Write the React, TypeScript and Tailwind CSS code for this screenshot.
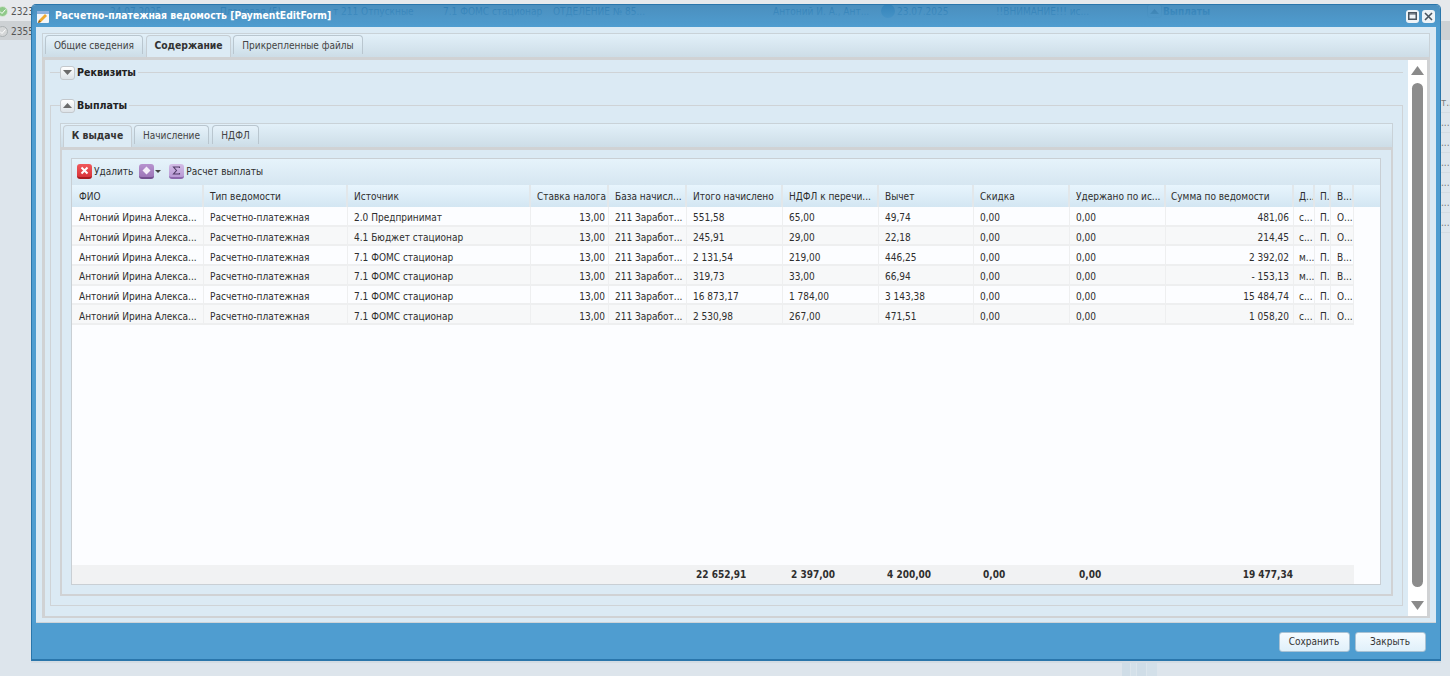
const FONT = "font-['DejaVu_Sans_Condensed','DejaVu_Sans',sans-serif]";

const cols = [132, 144, 183, 78, 78, 96, 96, 95, 96, 96, 128, 21, 16, 23];
const headers = ["ФИО", "Тип ведомости", "Источник", "Ставка налога", "База начисл...", "Итого начислено", "НДФЛ к перечи...", "Вычет", "Скидка", "Удержано по ис...", "Сумма по ведомости", "Д...", "П.", "В..."];
const rightAligned = [3, 10];
const rows = [
  ["2.0 Предпринимат", "551,58", "65,00", "49,74", "481,06", "с...", "О..."],
  ["4.1 Бюджет стационар", "245,91", "29,00", "22,18", "214,45", "с...", "О..."],
  ["7.1 ФОМС стационар", "2 131,54", "219,00", "446,25", "2 392,02", "м...", "В..."],
  ["7.1 ФОМС стационар", "319,73", "33,00", "66,94", "- 153,13", "м...", "В..."],
  ["7.1 ФОМС стационар", "16 873,17", "1 784,00", "3 143,38", "15 484,74", "с...", "О..."],
  ["7.1 ФОМС стационар", "2 530,98", "267,00", "471,51", "1 058,20", "с...", "О..."],
];
const bgRightRows = ["т...", "...", "...", "...", "...", "...", "..."];

function Tab({ label, active, w }: { label: string; active?: boolean; w: string }) {
  return active ? (
    <div className={`${w} flex h-[22px] items-center justify-center rounded-t-[4px] border border-b-0 border-[#c6ced4] bg-[#dcebf5] pb-[2px] text-[10.300px] font-bold text-[#333]`}>
      {label}
    </div>
  ) : (
    <div className={`${w} flex h-[19px] items-center justify-center rounded-t-[4px] border border-b-0 border-[#b9c6cf] bg-linear-to-b from-[#e6f2fa] to-[#cfe0ea] text-[#444]`}>
      {label}
    </div>
  );
}

function Toggle({ up }: { up?: boolean }) {
  return (
    <span className="flex h-[14px] w-[15px] items-center justify-center rounded-[3px] border border-[#c4c8cc] bg-linear-to-b from-white to-[#dde3e8]">
      <svg width="9" height="5" viewBox="0 0 9 5">
        <path d={up ? "M4.5 0 9 5H0z" : "M0 0h9L4.500 5z"} fill="#6b6b6b" />
      </svg>
    </span>
  );
}

function Legend({ label, up, ml }: { label: string; up?: boolean; ml: string }) {
  return (
    <legend className={`${ml} flex h-[15px] items-center gap-[2px] pr-[2px] text-[10.600px] font-bold text-[#222]`}>
      <Toggle up={up} />
      <span>{label}</span>
    </legend>
  );
}

function IconTile({ from, to, edge, children }: { from: string; to: string; edge: string; children: React.ReactNode }) {
  return (
    <span className={`flex h-[15px] w-[15px] items-center justify-center rounded-[3px] border-b-2 ${from} ${to} ${edge} bg-linear-to-b`}>
      {children}
    </span>
  );
}

function narrowPad(j: number) {
  if (j === 11 || j === 12) return "pl-[5px] pr-0";
  if (j === 13) return "pl-[6px] pr-0";
  return "";
}

export default function App() {
  return (
    <div className={`relative h-[676px] w-full overflow-hidden bg-[#dde5ec] text-[10px] ${FONT}`}>
      {/* page behind the window */}
      <div className="flex h-full flex-col">
        <div className="flex h-[21px] items-center whitespace-nowrap bg-[#e6e9ec] pt-[1px] text-[#3a6f96]">
          <span className="flex w-[110px] items-center text-[#555]">
            <svg width="11" height="11" viewBox="0 0 11 11" className="-ml-[3px] mr-[3px]"><circle cx="5.5" cy="5.5" r="5" fill="#8fc98a" stroke="#d9e6d6" /><path d="M3 5.5l2 2 3.500-4" stroke="#fff" fill="none" /></svg>
            2323
          </span>
          <span className="w-[110px]">24.07.2025</span>
          <span className="w-[113px]">Плановая (5)</span>
          <span className="w-[110px]">т 211 Отпускные</span>
          <span className="w-[110px]">7.1 ФОМС стационар</span>
          <span className="w-[220px]">ОТДЕЛЕНИЕ № 85...</span>
          <span className="w-[108px]">Антоний И. А., Ант...</span>
          <span className="mr-[2px] h-[14px] w-[14px] rounded-full bg-[#5b9fcb]" />
          <span className="w-[99px]">23.07.2025</span>
          <span className="w-[151px]">!!ВНИМАНИЕ!!! ис...</span>
          <span className="mr-[1px] w-[15px]"><Toggle up /></span>
          <span className="font-bold">Выплаты</span>
        </div>
        <div className="flex h-[19px] items-center bg-[#cdd1d4] pt-[1px] text-[#555]">
          <svg width="11" height="11" viewBox="0 0 11 11" className="-ml-[3px] mr-[3px]"><circle cx="5.5" cy="5.5" r="5" fill="#d5d7d8" stroke="#aab0b2" /><path d="M3 5.500l2 2 3.500-4" stroke="#fff" fill="none" /></svg>
          2355
        </div>
        <div className="flex flex-1">
          <div className="ml-[1122px] flex w-[35px]">
            <div className="w-[8px] bg-[#cfdde7]" />
            <div className="w-[6px] border-l border-[#dbe5ec] bg-[#d3e0e9]" />
            <div className="w-[10px] border-l border-[#dbe5ec] bg-[#cfdde7]" />
            <div className="flex-1 border-l border-[#dbe5ec] bg-[#d3e0e9]" />
          </div>
          <div className="ml-auto mt-[53px] flex w-[10px] flex-col overflow-hidden text-[#777]">
            {bgRightRows.map((t, i) => (
              <div key={i} className="flex h-[20px] items-center border-b border-[#d3dbe2] pl-[1px]">{t}</div>
            ))}
          </div>
        </div>
      </div>

      {/* modal window */}
      <div className="absolute left-[31px] top-[4px] flex h-[657px] w-[1409.5px] flex-col rounded-t-[5px] border-x border-t border-b-2 border-[#2a76ab] shadow-[0_2px_0_#d3dce3]">
        <div className="flex h-[22px] shrink-0 items-center rounded-t-[4px] bg-linear-to-b from-[#2f7fb6]/85 to-[#4f9dd0] pl-[4px] pr-[5px]">
          <svg width="15" height="15" viewBox="0 0 15 15" className="mr-[4px] mt-[2px]">
            <rect x="1" y="1" width="12" height="12" rx="1" fill="#f3f6fa" />
            <rect x="1" y="1" width="12" height="3" fill="#8fb1dd" />
            <path d="M2 13l1-3 6-6 2 2-6 6z" fill="#f0a92e" />
            <path d="M2 13l1-3 2 2z" fill="#8a5a16" />
          </svg>
          <span className="flex-1 text-[10.300px] font-bold text-white">Расчетно-платежная ведомость [PaymentEditForm]</span>
          <div className="flex gap-[3px]">
            <span className="flex h-[13px] w-[13px] items-center justify-center rounded-[3px] bg-[#eef3f7]">
              <svg width="9" height="8" viewBox="0 0 9 8"><rect x=".75" y=".75" width="7.500" height="6.500" fill="none" stroke="#4a5560" strokeWidth="1.500" /><path d="M1 2h7" stroke="#4a5560" /></svg>
            </span>
            <span className="flex h-[13px] w-[13px] items-center justify-center rounded-[3px] bg-[#eef3f7]">
              <svg width="9" height="9" viewBox="0 0 9 9"><path d="M1 1l7 7M8 1L1 8" stroke="#4a5560" strokeWidth="1.600" /></svg>
            </span>
          </div>
        </div>

        <div className="flex min-h-0 flex-1 flex-col border-x-[4px] border-[#4f9dd0] bg-[#dbeaf4]">
          <div className="flex-1 border-b border-[#cfd4d8] px-[6px] pt-[6px]">
            {/* outer tab strip */}
            <div className="flex h-[24px] border-x border-t border-[#c9d2d8] bg-linear-to-b from-[#e2f0f9] to-[#cddde7] pl-[2px] pt-[1px]">
              <Tab label="Общие сведения" w="w-[98px]" />
              <div className="ml-[3px]"><Tab label="Содержание" active w="w-[85px]" /></div>
              <div className="ml-[2px]"><Tab label="Прикрепленные файлы" w="w-[130px]" /></div>
            </div>

            {/* outer tab panel */}
            <div className="flex h-[561px] border-x-[3px] border-b-[2px] border-t-[3px] border-[#d0d2d4]">
              <div className="min-w-0 flex-1 px-[5px] pt-[5px]">
                <fieldset className="border-t border-[#cfd3d6]">
                  <Legend label="Реквизиты" ml="ml-[10px]" />
                </fieldset>
                <fieldset className="mt-[18px] h-[508px] border border-[#cfd3d6] px-[9px]">
                  <Legend label="Выплаты" up ml="ml-0" />
                  <div className="mt-[10px]">
                    {/* inner tab strip */}
                    <div className="flex h-[24px] border-x border-t border-[#c9d2d8] bg-linear-to-b from-[#e2f0f9] to-[#cddde7] pl-[2px] pt-[1px]">
                      <Tab label="К выдаче" active w="w-[69px]" />
                      <div className="ml-[2px]"><Tab label="Начисление" w="w-[75px]" /></div>
                      <div className="ml-[3px]"><Tab label="НДФЛ" w="w-[47px]" /></div>
                    </div>
                    {/* inner tab panel */}
                    <div className="h-[449px] border-x-[2px] border-b-[2px] border-t-[3px] border-[#d0d2d4] pl-[9px] pr-[10px] pt-[8px]">
                      <div className="flex h-[427px] flex-col border border-[#c9cfd4] bg-[#fcfdff] text-[#2e2e2e]">
                        {/* toolbar */}
                        <div className="flex h-[26px] shrink-0 items-center bg-linear-to-b from-[#e6f3fb] to-[#d6e6f1] pb-[1px] pl-[5px]">
                          <IconTile from="from-[#f0585c]" to="to-[#d9343a]" edge="border-[#a81c20]">
                            <svg width="9" height="9" viewBox="0 0 9 9"><path d="M1.500 1.500l6 6M7.500 1.500l-6 6" stroke="#fff" strokeWidth="2" /></svg>
                          </IconTile>
                          <span className="ml-[2px]">Удалить</span>
                          <span className="ml-[6px]">
                            <IconTile from="from-[#b793cf]" to="to-[#9d76b8]" edge="border-[#74508f]">
                              <svg width="9" height="9" viewBox="0 0 9 9"><path d="M4.500.5l4 4-4 4-4-4z" fill="#f4eefa" /></svg>
                            </IconTile>
                          </span>
                          <svg width="6" height="3" viewBox="0 0 6 3" className="ml-[1px]"><path d="M0 0h6L3 3z" fill="#444" /></svg>
                          <span className="ml-[8px]">
                            <IconTile from="from-[#d3bde6]" to="to-[#b99ad5]" edge="border-[#8d68ad]">
                              <svg width="9" height="9" viewBox="0 0 9 9"><path d="M7.500 2V1h-6l3 3.500-3 3.500h6V7" stroke="#4f3a66" strokeWidth="1.100" fill="none" /></svg>
                            </IconTile>
                          </span>
                          <span className="ml-[2px]">Расчет выплаты</span>
                        </div>

                        {/* header */}
                        <div className="flex h-[22px] shrink-0 bg-linear-to-b from-[#e8f5fd] to-[#d3e6f2]">
                          {headers.map((h, i) => (
                            <div key={i} style={{ width: cols[i] }} className={`flex items-center overflow-hidden whitespace-nowrap border-r-[2px] border-[#e2e7ea] px-[6px] pt-[1px] ${i === 0 ? "pl-[7px]" : ""} ${i === 10 ? "pl-[5px]" : ""} ${narrowPad(i)}`}>
                              {h}
                            </div>
                          ))}
                        </div>

                        {/* rows */}
                        <div className="min-h-0 flex-1">
                          {rows.map((r, i) => {
                            const vals = ["Антоний Ирина Алекса...", "Расчетно-платежная", r[0], "13,00", "211 Заработ...", r[1], r[2], r[3], "0,00", "0,00", r[4], r[5], "П.", r[6]];
                            return (
                              <div key={i} className={`flex h-[19.67px] w-[1282px] border-b-[2px] border-[#eeeff0] ${i % 2 ? "bg-[#f7f8f9]" : ""}`}>
                                {vals.map((v, j) => (
                                  <div key={j} style={{ width: cols[j] }} className={`flex items-center overflow-hidden whitespace-nowrap border-r border-[#eeeff0] px-[6px] pt-[4px] leading-[13px] ${j === 0 ? "pl-[7px]" : ""} ${rightAligned.includes(j) ? "justify-end pr-[3px]" : ""} ${j === 10 ? "pr-[4px]" : ""} ${narrowPad(j)}`}>
                                    {v}
                                  </div>
                                ))}
                              </div>
                            );
                          })}
                        </div>

                        {/* summary */}
                        <div className="flex h-[19px] w-[1282px] shrink-0 items-center bg-[#f1f2f3] font-bold">
                          <div className="w-[615px]" />
                          <div className="w-[96px] pl-[9px]">22 652,91</div>
                          <div className="w-[96px] pl-[8px]">2 397,00</div>
                          <div className="w-[95px] pl-[8px]">4 200,00</div>
                          <div className="w-[96px] pl-[9px]">0,00</div>
                          <div className="w-[96px] pl-[9px]">0,00</div>
                          <div className="w-[127px] text-right">19 477,34</div>
                        </div>
                      </div>
                    </div>
                  </div>
                </fieldset>
              </div>

              {/* scrollbar */}
              <div className="flex w-[19px] shrink-0 flex-col items-center bg-white pt-[6px]">
                <svg width="13" height="9" viewBox="0 0 13 9"><path d="M6.500 0 13 9H0z" fill="#8a8a8a" /></svg>
                <div className="mt-[8px] h-[504px] w-[11px] rounded-full bg-[#8c8c8c]" />
                <svg width="13" height="9" viewBox="0 0 13 9" className="mt-[14px]"><path d="M0 0h13L6.500 9z" fill="#8a8a8a" /></svg>
              </div>
            </div>
          </div>
        </div>

        {/* footer */}
        <div className="flex h-[36px] shrink-0 items-center justify-end gap-[5px] bg-[#4f9dd0] pt-[1px] pr-[14px]">
          <button className="h-[20px] w-[71px] rounded-[3px] border border-[#a9c2d4] bg-linear-to-b from-[#f5fbff] to-[#e0f0fa] text-[#333]">Сохранить</button>
          <button className="h-[20px] w-[71px] rounded-[3px] border border-[#a9c2d4] bg-linear-to-b from-[#f5fbff] to-[#e0f0fa] text-[#333]">Закрыть</button>
        </div>
      </div>
    </div>
  );
}
